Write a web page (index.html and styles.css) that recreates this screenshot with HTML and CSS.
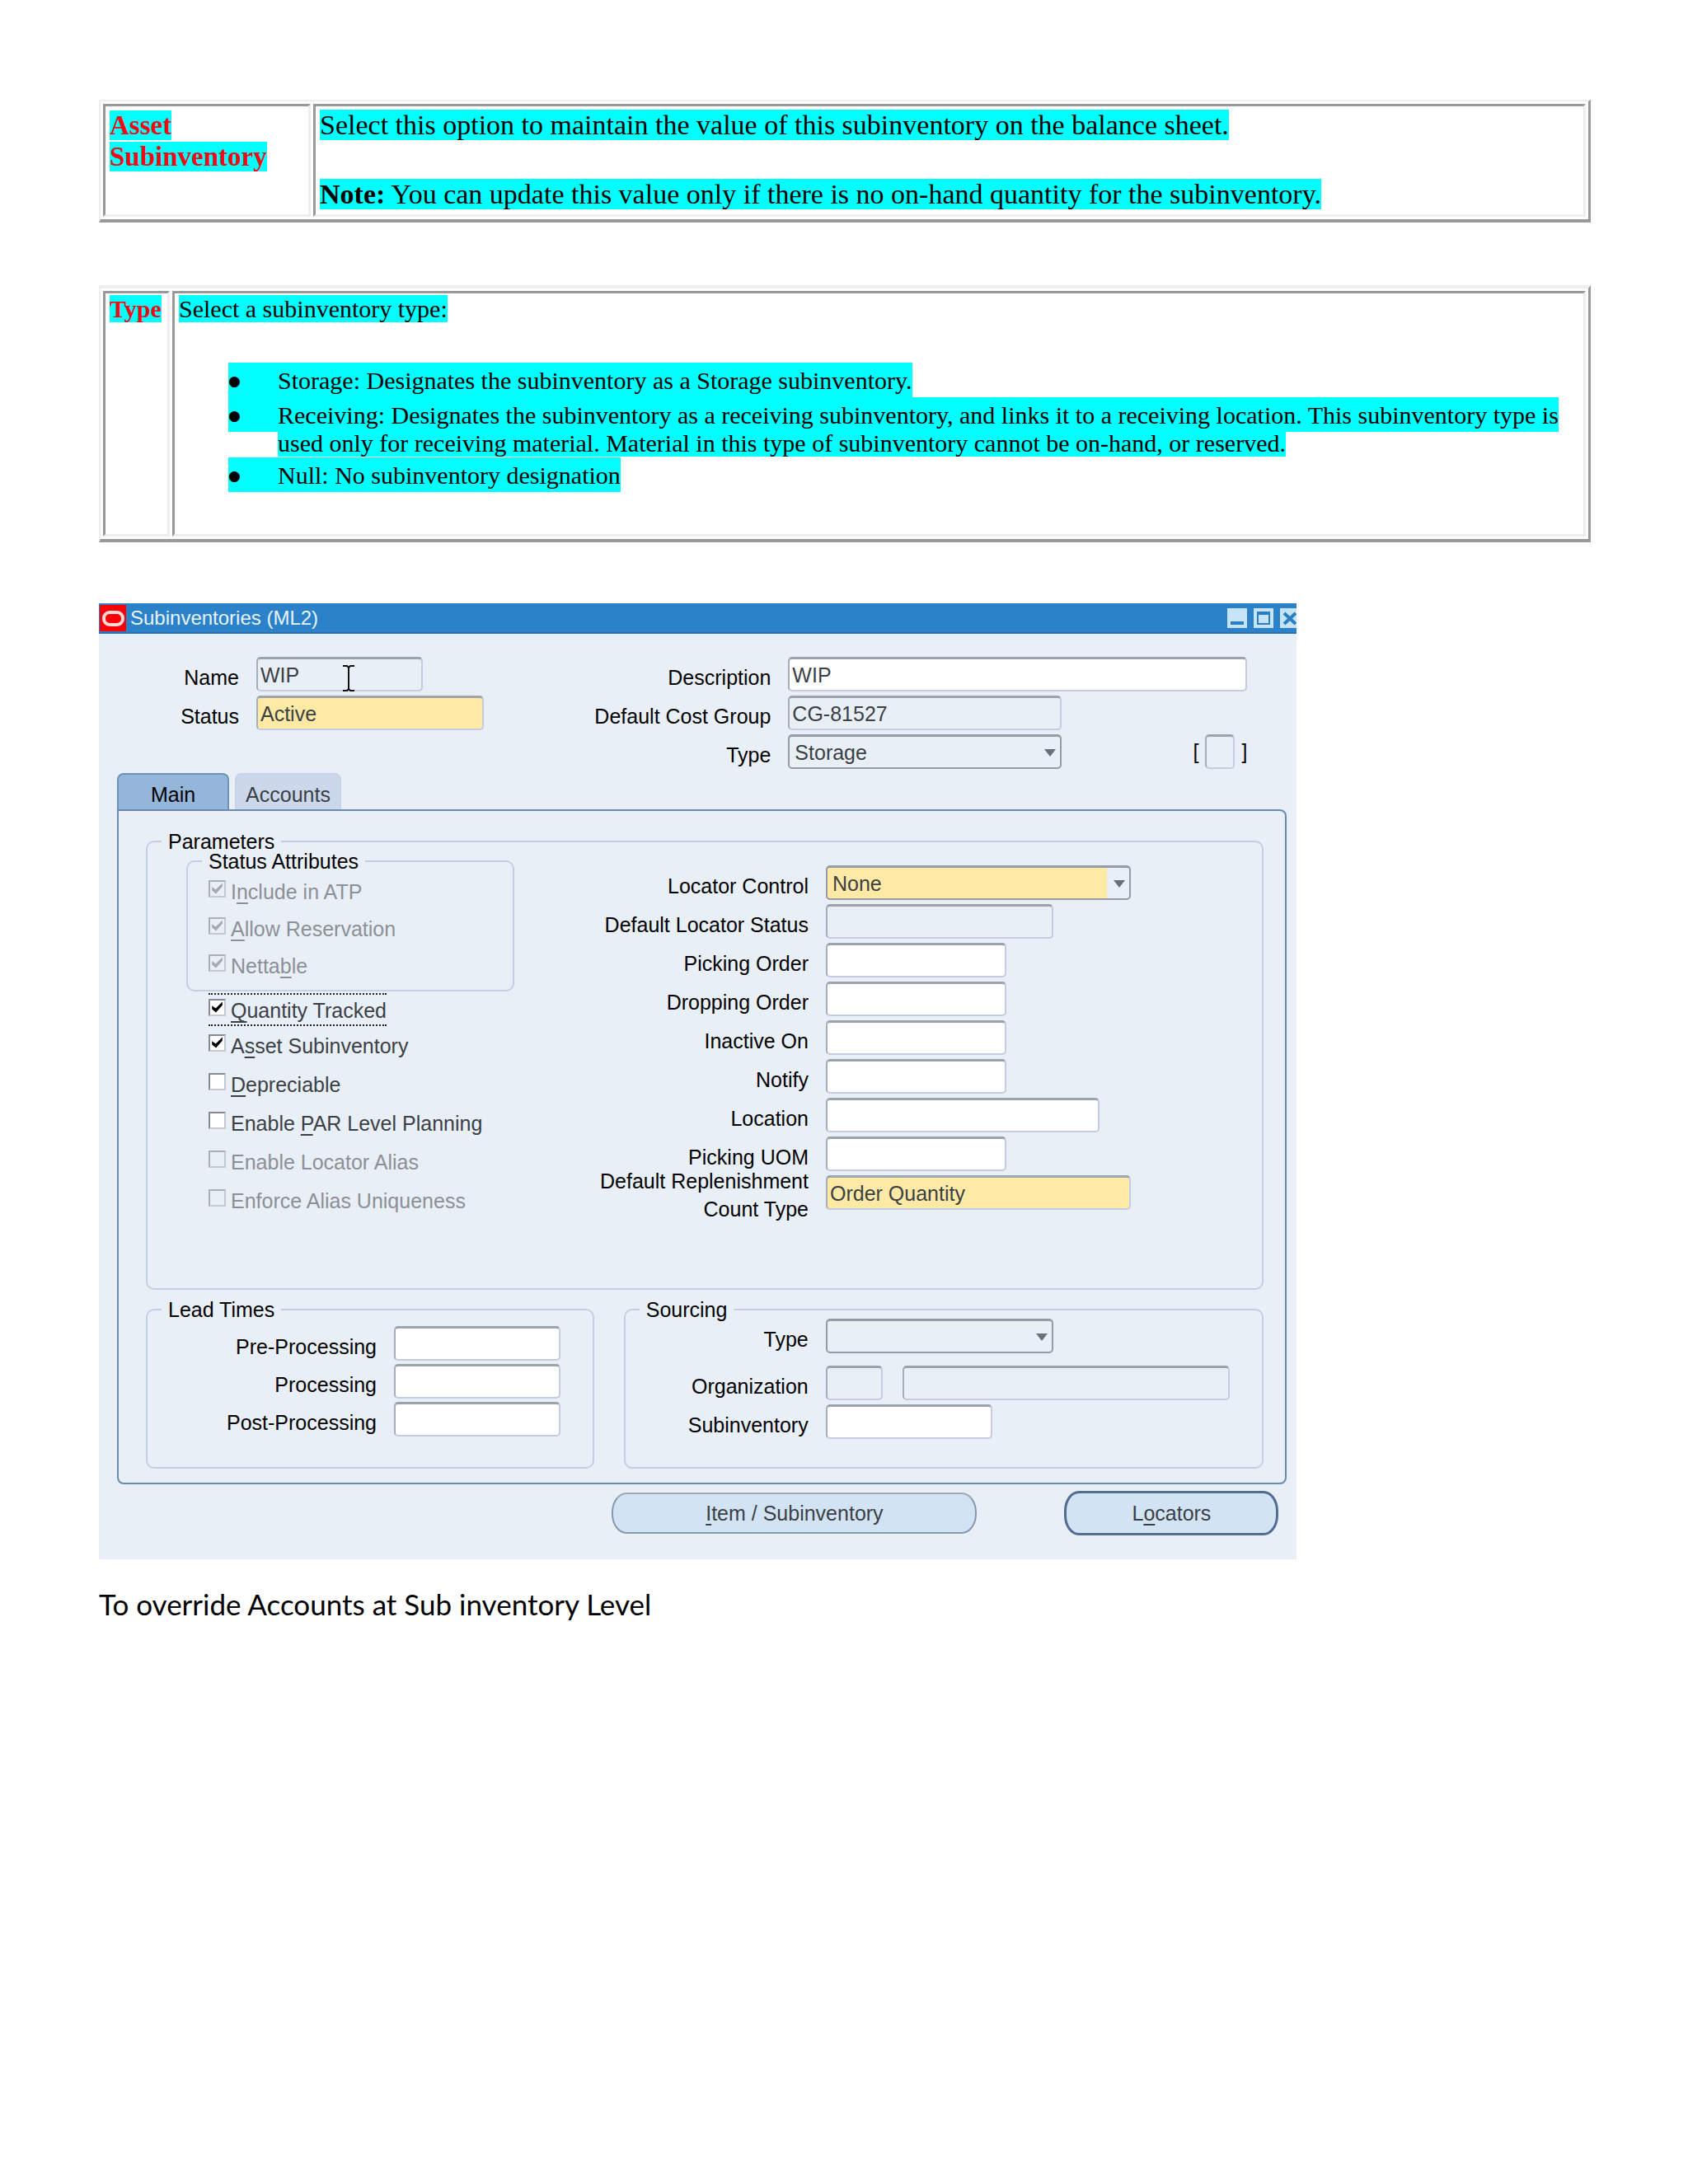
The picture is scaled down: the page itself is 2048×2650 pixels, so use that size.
FILE: index.html
```html
<!DOCTYPE html>
<html lang="en">
<head>
    <meta charset="utf-8">
    <title>Subinventories</title>
    <link rel="stylesheet" href="styles.css">
</head>
<body>
    <table class="doc-table">
        <tr>
            <th class="term-wide" scope="row"><span class="hl">Asset<br>Subinventory</span></th>
            <td class="asset-text">
                <p class="para"><span class="hl">Select this option to maintain the value of this subinventory on the balance sheet.</span></p>
                <p><span class="hl"><b>Note:</b> You can update this value only if there is no on-hand quantity for the subinventory.</span></p>
            </td>
        </tr>
    </table>

    <table class="doc-table type-table">
        <tr>
            <th class="term" scope="row"><span class="hl">Type</span></th>
            <td>
                <p><span class="hl">Select a subinventory type:</span></p>
                <ul class="types">
                    <li><span class="hl first"><i class="bullet">●</i>Storage: Designates the subinventory as a Storage subinventory.</span></li>
                    <li><span class="hl first"><i class="bullet">●</i>Receiving: Designates the subinventory as a receiving subinventory, and links it to a receiving location. This subinventory type is</span><br>
                        <span class="hl">used only for receiving material. Material in this type of subinventory cannot be on-hand, or reserved.</span></li>
                    <li><span class="hl first"><i class="bullet">●</i>Null: No subinventory designation</span></li>
                </ul>
            </td>
        </tr>
    </table>

    <form class="window" action="">
        <div class="titlebar">
            <svg class="logo" viewBox="0 0 32 32" width="32" height="32">
                <rect width="32" height="32" fill="#fb0007"/>
                <rect x="5" y="9" width="23" height="15" rx="7" fill="none" stroke="#ffd9d6" stroke-width="4"/>
            </svg>
            <span class="title">Subinventories (ML2)</span>
            <button type="button" class="win-btn" aria-label="Minimize">
                <svg viewBox="0 0 24 24"><path d="M4 18h16" stroke="#2b7fc0" stroke-width="4"/></svg>
            </button>
            <button type="button" class="win-btn" aria-label="Maximize">
                <svg viewBox="0 0 24 24"><path d="M5 5v14h14V5z" fill="none" stroke="#2b7fc0" stroke-width="2"/><path d="M4 6h16" stroke="#2b7fc0" stroke-width="4"/></svg>
            </button>
            <button type="button" class="win-btn close" aria-label="Close">
                <svg viewBox="0 0 20 24"><path d="M5 6l14 13M19 6L5 19" stroke="#2b7fc0" stroke-width="4"/></svg>
            </button>
        </div>

        <div class="header">
            <div class="fields header-left">
                <label for="name">Name</label>
                <div class="name-box">
                    <input id="name" class="w-sm off" type="text" value="WIP">
                    <!-- text cursor -->
                    <svg class="ibeam" viewBox="0 0 16 32" width="16" height="32"><path d="M1 1h5l2 2 2-2h5M8 3v26M1 31h5l2-2 2 2h5" fill="none" stroke="#111" stroke-width="2"/></svg>
                </div>
                <label for="status">Status</label>
                <input id="status" class="w-lg req" type="text" value="Active">
            </div>
            <div class="fields header-right">
                <label for="description">Description</label>
                <input id="description" class="w-full" type="text" value="WIP">
                <label for="costGroup">Default Cost Group</label>
                <input id="costGroup" class="w-xl off" type="text" value="CG-81527">
                <label for="type">Type</label>
                <div class="split">
                    <div class="select w-xl"><select id="type"><option>Storage</option></select></div>
                    <div class="flex-box">[<input class="flexfield off" type="text" aria-label="Descriptive flexfield">]</div>
                </div>
            </div>
        </div>

        <div class="tabs">
            <button type="button" class="tab active">Main</button>
            <button type="button" class="tab">Accounts</button>
        </div>

        <div class="panel">
            <fieldset>
                <legend>Parameters</legend>
                <div class="parameters">
                    <div class="checks">
                        <fieldset class="status-attr">
                            <legend>Status Attributes</legend>
                            <div class="status-checks">
                                <label class="check disabled"><input type="checkbox" checked disabled><span>I<u>n</u>clude in ATP</span></label>
                                <label class="check disabled"><input type="checkbox" checked disabled><span><u>A</u>llow Reservation</span></label>
                                <label class="check disabled"><input type="checkbox" checked disabled><span>Netta<u>b</u>le</span></label>
                            </div>
                        </fieldset>
                        <div class="options">
                            <label class="check focused"><input type="checkbox" checked><span><u>Q</u>uantity Tracked</span></label>
                            <label class="check"><input type="checkbox" checked><span>A<u>s</u>set Subinventory</span></label>
                            <label class="check"><input type="checkbox"><span><u>D</u>epreciable</span></label>
                            <label class="check"><input type="checkbox"><span>Enable <u>P</u>AR Level Planning</span></label>
                            <label class="check disabled"><input type="checkbox" disabled><span>Enable Locator Alias</span></label>
                            <label class="check disabled"><input type="checkbox" disabled><span>Enforce Alias Uniqueness</span></label>
                        </div>
                    </div>
                    <div class="fields param-fields">
                        <label for="locatorControl">Locator Control</label>
                        <div class="select w-xxl"><select id="locatorControl" class="req-select"><option>None</option></select></div>
                        <label for="locatorStatus">Default Locator Status</label>
                        <input id="locatorStatus" class="w-lg off" type="text">
                        <label for="pickingOrder">Picking Order</label>
                        <input id="pickingOrder" class="w-md" type="text">
                        <label for="droppingOrder">Dropping Order</label>
                        <input id="droppingOrder" class="w-md" type="text">
                        <label for="inactiveOn">Inactive On</label>
                        <input id="inactiveOn" class="w-md" type="text">
                        <label for="notify">Notify</label>
                        <input id="notify" class="w-md" type="text">
                        <label for="location">Location</label>
                        <input id="location" class="w-xl" type="text">
                        <label for="pickingUom">Picking UOM</label>
                        <input id="pickingUom" class="w-md" type="text">
                        <label class="two-line" for="countType">Default Replenishment<br>Count Type</label>
                        <input id="countType" class="w-xxl req" type="text" value="Order Quantity">
                    </div>
                </div>
            </fieldset>

            <div class="bottom">
                <fieldset>
                    <legend>Lead Times</legend>
                    <div class="fields lead">
                        <label for="pre">Pre-Processing</label>
                        <input id="pre" class="w-sm" type="text">
                        <label for="processing">Processing</label>
                        <input id="processing" class="w-sm" type="text">
                        <label for="post">Post-Processing</label>
                        <input id="post" class="w-sm" type="text">
                    </div>
                </fieldset>
                <fieldset>
                    <legend>Sourcing</legend>
                    <div class="fields source-type">
                        <label for="sourceType">Type</label>
                        <div class="select w-lg"><select id="sourceType"><option></option></select></div>
                    </div>
                    <div class="fields sourcing">
                        <label for="org">Organization</label>
                        <div class="org">
                            <input id="org" class="w-xs off" type="text">
                            <input class="w-full off" type="text" aria-label="Organization name">
                        </div>
                        <label for="sub">Subinventory</label>
                        <input id="sub" class="w-sm" type="text">
                    </div>
                </fieldset>
            </div>
        </div>

        <div class="actions">
            <button type="button" class="btn"><u>I</u>tem / Subinventory</button>
            <button type="button" class="btn default">L<u>o</u>cators</button>
        </div>
    </form>

    <p class="caption">To override Accounts at Sub inventory Level</p>
</body>
</html>
```

FILE: styles.css
```css
* {
    box-sizing: border-box;
}
body {
    margin: 0;
    padding: 121px 118px 120px 120px;
    background: #fff;
    color: #000;
    font-family: "Liberation Serif", serif;
    font-size: 33px;
    line-height: 38px;
}
p {
    margin: 0;
}

/* description tables */
.doc-table {
    width: 100%;
    border-style: solid;
    border-width: 2px 3px 4px 2px;
    border-color: #eee #999 #999 #eee;
    border-collapse: separate;
    border-spacing: 3px;
}
.doc-table th,
.doc-table td {
    padding: 4px 5px 5px;
    border-style: solid;
    border-width: 3px;
    border-color: #999 #eee #eee #999;
    text-align: left;
    vertical-align: top;
}
.doc-table th {
    color: #f00a14;
}
.term-wide {
    width: 252px;
}
.term {
    width: 81px;
}
.asset-text {
    font-size: 34px;
}
.para {
    margin-bottom: 46px;
}
.hl {
    background: #0ff;
}
.type-table {
    margin-top: 76px;
    border-top-width: 4px;
    font-size: 30px;
    line-height: 34px;
}
.type-table th,
.type-table td {
    padding-top: 2px;
}
.types {
    margin: 48px 0 49px;
    padding: 0 0 0 120px;
    list-style: none;
}
.types li {
    padding-top: 5px;
    line-height: 34px;
    white-space: nowrap;
}
.types li:first-child {
    padding-bottom: 3px;
}
.first {
    margin-left: -60px;
    padding: 5px 0 4px;
}
.bullet {
    display: inline-block;
    width: 60px;
    font-family: "DejaVu Sans", sans-serif;
    font-size: 17px;
    font-style: normal;
    line-height: 20px;
    vertical-align: 4px;
}

/* application window */
.window {
    width: 80.3%;
    margin-top: 74px;
    padding-bottom: 29px;
    background: #e9eff6;
    font-family: "Liberation Sans", Arial, sans-serif;
    font-size: 25px;
    line-height: 34px;
}
.titlebar {
    display: flex;
    align-items: center;
    gap: 8px;
    height: 37px;
    padding-left: 1px;
    border-bottom: 2px solid #2770b4;
    background: #2c82c8;
    color: #e8f4fd;
    font-size: 24px;
}
.title {
    flex: 1;
    margin-left: -3px;
}
.win-btn {
    width: 24px;
    height: 24px;
    padding: 0;
    border: 0;
    background: #c5e4f8;
}
.win-btn svg {
    display: block;
    height: 24px;
}
.close {
    width: 20px;
}

input,
select,
button {
    font: inherit;
    color: #3c3f46;
}
input[type="text"],
select {
    height: 42px;
    margin: 0;
    padding: 1px 3px 0;
    border: 2px solid #c3cce2;
    border-top: 3px solid #9ba3ad;
    border-left-color: #a5adbb;
    border-radius: 5px;
    background: #fff;
    outline: none;
}
input[type="text"].off {
    background: #e9f0f5;
}
input[type="text"].req {
    background: #feeaa4;
}
.w-xs { width: 69px; }
.w-sm { width: 202px; }
.w-md { width: 219px; }
.w-lg { width: 276px; }
.w-xl { width: 332px; }
.w-xxl { width: 370px; }
.w-full { width: 100%; }

.select {
    position: relative;
}
.select::after {
    content: "";
    position: absolute;
    top: 18px;
    right: 7px;
    border: 7px solid transparent;
    border-top: 9px solid #68707e;
    border-bottom: 0;
    pointer-events: none;
}
select {
    appearance: none;
    display: block;
    width: 100%;
    padding: 1px 6px 0;
    border-color: #969ca6;
    background: #e9f0f5;
}
.select .req-select {
    background: linear-gradient(to right, #feeaa4 calc(100% - 27px), #e9eff6 calc(100% - 27px));
}

.fields {
    display: grid;
    grid-auto-rows: 42px;
    gap: 5px 21px;
}
.fields > label {
    padding-top: 8px;
    text-align: right;
    white-space: nowrap;
}
.fields > .two-line {
    padding-top: 0;
    margin-top: -10px;
}
.header {
    display: grid;
    grid-template-columns: 40% 1fr;
    padding-top: 28px;
}
.header-left {
    grid-template-columns: 170px 1fr;
}
.header-right {
    grid-template-columns: 234px 1fr;
    padding-right: 60px;
}
.name-box {
    position: relative;
}
.ibeam {
    position: absolute;
    top: 10px;
    left: 104px;
}
.split,
.org {
    display: flex;
    justify-content: space-between;
}
.org {
    gap: 24px;
    padding-right: 39px;
}
.org .w-xs {
    flex: none;
}
.flex-box {
    display: flex;
    align-items: center;
    gap: 8px;
    color: #000;
}
input.flexfield {
    width: 36px;
}

/* tabs */
.tabs {
    display: flex;
    gap: 7px;
    margin: 5px 0 0 22px;
}
.tab {
    height: 44px;
    width: 129px;
    padding: 6px 0 0;
    border: 2px solid #c8d2e8;
    border-bottom: 0;
    border-radius: 8px 8px 0 0;
    background: #cbd7ea;
}
.tab.active {
    width: 136px;
    border-color: #6f93b8;
    background: #94b6da;
    color: #000;
}
.panel {
    margin: 0 12px 0 22px;
    padding: 26px 26px 17px 33px;
    border: 2px solid #6d89ab;
    border-radius: 0 8px 8px 8px;
}
fieldset {
    min-width: 0;
    margin: 0;
    padding: 0;
    border: 2px solid #c5cfe4;
    border-radius: 10px;
}
legend {
    margin-left: 17px;
    padding: 0 8px;
    color: #000;
    line-height: 22px;
}
.parameters {
    display: grid;
    grid-template-columns: 40% 1fr;
    padding-bottom: 75px;
}
.checks {
    padding: 2px 0 0 47px;
}
.status-attr {
    width: 398px;
}
.status-checks {
    padding: 10px 25px 0;
}
.check {
    display: flex;
    gap: 6px;
    width: fit-content;
    margin-bottom: 13px;
    color: #3c3f46;
    line-height: 32px;
}
.options {
    padding-left: 27px;
}
.options .check {
    margin: 0 0 15px;
}
.options .focused {
    margin: 2px 0 8px;
    padding: 3px 0 1px;
    border: dotted #222;
    border-width: 2px 0;
}
.disabled,
.options .disabled {
    color: #8d9096;
}
.check input {
    appearance: none;
    width: 21px;
    height: 21px;
    margin: 2px 0 0;
    border: 2px solid #c6cad0;
    border-top-color: #858b94;
    border-left-color: #858b94;
    background: #fff;
}
.check input:disabled {
    border-color: #c4c9d0;
    border-top-color: #abb0b8;
    border-left-color: #abb0b8;
    background: #e9eff6;
}
.check input:checked::after {
    content: "";
    display: block;
    width: 15px;
    height: 14px;
    margin: 1px;
    background: #000;
    clip-path: polygon(8% 38%, 38% 60%, 92% 4%, 92% 34%, 40% 96%, 8% 68%);
}
.check input:disabled:checked::after {
    background: #a5a9b0;
}
u {
    text-decoration-thickness: 2px;
    text-underline-offset: 4px;
    text-decoration-skip-ink: none;
}
.param-fields {
    grid-template-columns: 261px 1fr;
    padding-top: 18px;
}
.bottom {
    display: grid;
    grid-template-columns: 7fr 10fr;
    gap: 36px;
    margin-top: 13px;
}
.lead {
    grid-template-columns: 278px 1fr;
    row-gap: 4px;
    padding: 9px 0 37px;
}
.source-type,
.sourcing {
    grid-template-columns: 222px 1fr;
}
.sourcing {
    margin-top: 15px;
}

/* bottom buttons */
.actions {
    display: flex;
    justify-content: flex-end;
    align-items: center;
    gap: 106px;
    margin-top: 8px;
    padding-right: 22px;
}
.btn {
    width: 443px;
    height: 50px;
    padding: 0;
    border: 2px solid #8499ae;
    border-top-color: #a0a7ae;
    border-radius: 18px / 24px;
    background: #d2e4f3;
}
.btn.default {
    width: 260px;
    height: 54px;
    border: 3px solid #536c94;
}

.caption {
    margin-top: 34px;
    font-family: Lato, sans-serif;
    font-size: 35px;
    line-height: 40px;
}
```
